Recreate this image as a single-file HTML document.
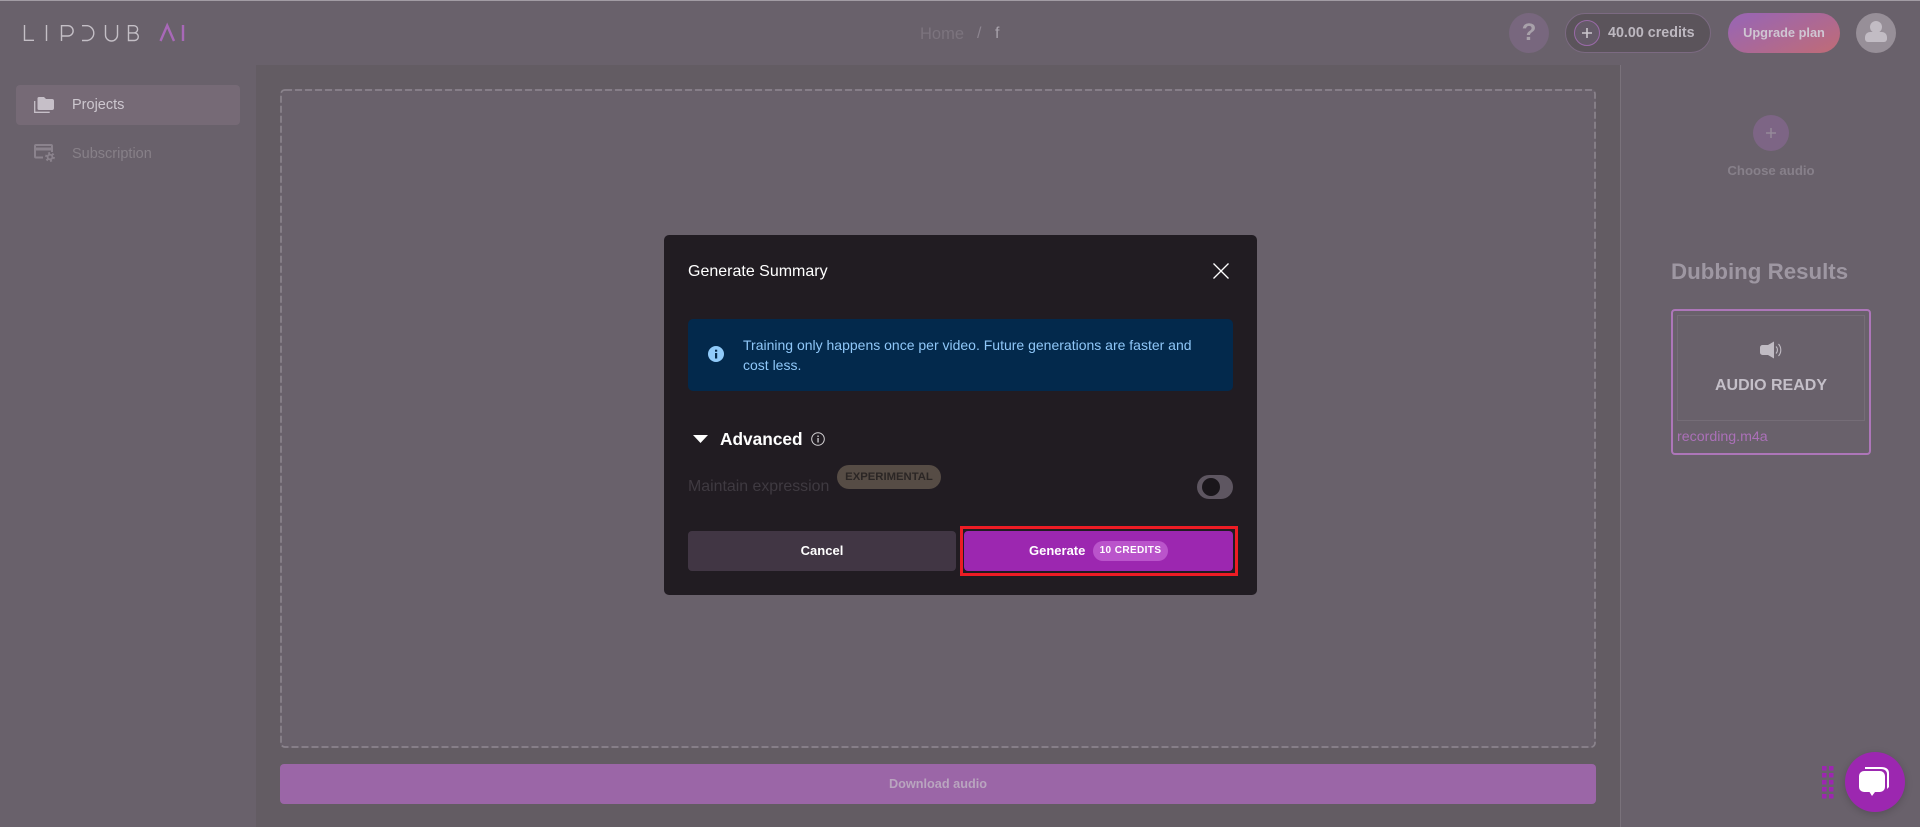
<!DOCTYPE html>
<html lang="en"><head><meta charset="utf-8"><title>LipDub AI</title>
<style>
*{box-sizing:border-box;margin:0;padding:0}
html,body{width:1920px;height:827px;overflow:hidden;background:#69616b;font-family:"Liberation Sans",sans-serif}
.a{position:absolute;white-space:nowrap}
.t{position:absolute;white-space:nowrap;line-height:20px}
svg{position:absolute;overflow:visible}
</style></head><body>
<div class="a" style="left:0;top:0;width:1920px;height:1px;background:#a29ca4"></div>
<div class="a" style="left:256px;top:65px;width:1364px;height:762px;background:#635c63"></div>
<div class="a" style="left:1620px;top:65px;width:1px;height:762px;background:#7a727b"></div>

<svg style="left:0;top:0" width="200" height="60" fill="none" stroke-width="1.4">
<g stroke="#c4bfc6"><path d="M24.5 25v15.3h9.5M46.5 25v16M61.5 41V25.7h6.5a5 5 0 0 1 0 10.3h-6.5M82 25.7h5.5a7.5 7.5 0 0 1 0 14.8H82M105.5 25v10a6 6 0 0 0 12 0V25M128.5 25.7v14.8h6a3.8 3.8 0 0 0 0-7.6h-6h5.500a3.600 3.600 0 0 0 0-7.200z"/></g>
<path d="M160.500 41l6.700-15.500L174 41M183 25v16" stroke="#a868b8" stroke-width="2.400"/>
</svg>

<div class="a" style="left:16px;top:85px;width:224px;height:40px;border-radius:4px;background:#766a76"></div>
<svg style="left:34px;top:96px" width="20" height="18" viewBox="0 0 20 18">
<path d="M5 1h5l2 2h6a2 2 0 0 1 2 2v7a2 2 0 0 1-2 2H5a1.500 1.500 0 0 1-1.500-1.500v-10A1.500 1.500 0 0 1 5 1z" fill="#c6bfc8"/>
<path d="M.7 5v11.300h15" fill="none" stroke="#c6bfc8" stroke-width="1.300"/>
</svg>
<div class="t" style="left:72px;top:95px;font-size:14.500px;color:#cdc7cf">Projects</div>
<svg style="left:34px;top:144px" width="21" height="18" viewBox="0 0 21 18" fill="none">
<path d="M9 13.500H2a1 1 0 0 1-1-1V2a1 1 0 0 1 1-1h15a1 1 0 0 1 1 1v6" stroke="#8b838d" stroke-width="2"/>
<rect x="1" y="3.500" width="17" height="3" fill="#8b838d"/>
<circle cx="16" cy="13" r="2.400" stroke="#8b838d" stroke-width="1.800"/>
<circle cx="16" cy="13" r="4" stroke="#8b838d" stroke-width="1.800" stroke-dasharray="2 2.200"/>
</svg>
<div class="t" style="left:72px;top:144px;font-size:14.500px;color:#878088">Subscription</div>

<div class="t" style="left:920px;top:24px;font-size:16.500px;color:#7c747e">Home</div>
<div class="t" style="left:977px;top:24px;font-size:16px;color:#8d8590">/</div>
<div class="t" style="left:995px;top:24px;font-size:16px;color:#a8a2ab">f</div>

<div class="a" style="left:1509px;top:13px;width:40px;height:40px;border-radius:50%;background:#78677e"></div>
<div class="t" style="left:1509px;top:23px;width:40px;text-align:center;font-size:24px;font-weight:700;color:#a8a1aa">?</div>
<div class="a" style="left:1565px;top:13px;width:146px;height:40px;border-radius:20px;background:#5b545b;border:1px solid #7c6a82"></div>
<div class="a" style="left:1574px;top:20px;width:26px;height:26px;border-radius:50%;background:#645a68;border:1px solid #9a6aa8"></div>
<svg style="left:1581px;top:27px" width="12" height="12"><path d="M6 1v10M1 6h10" stroke="#cbc6cd" stroke-width="1.600"/></svg>
<div class="t" style="left:1608px;top:23px;font-size:14.300px;font-weight:700;color:#bdb8c0">40.00 credits</div>
<div class="a" style="left:1728px;top:13px;width:112px;height:40px;border-radius:20px;background:linear-gradient(155deg,#9c66ae 15%,#bc6b7c 90%)"></div>
<div class="t" style="left:1728px;top:23px;width:112px;text-align:center;font-size:12.800px;font-weight:700;color:#cfc6d2">Upgrade plan</div>
<div class="a" style="left:1856px;top:13px;width:40px;height:40px;border-radius:50%;background:#978f98"></div>
<svg style="left:1865px;top:20px" width="22" height="24" viewBox="0 0 22 24"><circle cx="11" cy="7" r="6" fill="#c2bcc4"/><path d="M0 17a5 5 0 0 1 5-5h12a5 5 0 0 1 5 5v2a3 3 0 0 1-3 3H3a3 3 0 0 1-3-3z" fill="#c2bcc4"/></svg>

<div class="a" style="left:280px;top:89px;width:1316px;height:659px;background:#69616b;border-radius:5px"></div>
<svg style="left:280px;top:89px" width="1316" height="659" fill="none"><rect x="1" y="1" width="1314" height="657" rx="4" stroke="#8a838c" stroke-width="1.700" stroke-dasharray="7 3"/></svg>
<div class="a" style="left:280px;top:764px;width:1316px;height:40px;border-radius:4px;background:#9b66a7"></div>
<div class="t" style="left:280px;top:774px;width:1316px;text-align:center;font-size:12.700px;font-weight:700;color:#b9a5bf">Download audio</div>

<div class="a" style="left:1753px;top:115px;width:36px;height:36px;border-radius:50%;background:#7d6585"></div>
<svg style="left:1765px;top:127px" width="12" height="12"><path d="M6 1v10M1 6h10" stroke="#958a9a" stroke-width="1.500"/></svg>
<div class="t" style="left:1671px;top:161px;width:200px;text-align:center;font-size:13.200px;font-weight:700;color:#87808a">Choose audio</div>
<div class="t" style="left:1671px;top:259px;font-size:22.300px;line-height:26px;font-weight:700;color:#9e97a2">Dubbing Results</div>
<div class="a" style="left:1671px;top:309px;width:200px;height:146px;border:2px solid #ad76b9;border-radius:4px"></div>
<div class="a" style="left:1677px;top:315px;width:188px;height:106px;border:1px solid #756d77"></div>
<svg style="left:1760px;top:341px" width="23" height="18" viewBox="0 0 23 18"><path d="M0 6.500a2.500 2.500 0 0 1 2.500-2.500H8L14 .5v17L8 14H2.500A2.500 2.500 0 0 1 0 11.500z" fill="#c0bbc3"/><path d="M16 5.500a5 5 0 0 1 0 7M18.500 3a9 9 0 0 1 0 12" fill="none" stroke="#c0bbc3" stroke-width="1.100"/></svg>
<div class="t" style="left:1677px;top:376px;width:188px;text-align:center;font-size:16px;font-weight:700;color:#c4bfc8">AUDIO READY</div>
<div class="t" style="left:1677px;top:427px;font-size:14.200px;color:#ab70b8">recording.m4a</div>

<div class="a" style="left:664px;top:235px;width:593px;height:360px;border-radius:5px;background:#211c22"></div>
<div class="t" style="left:688px;top:262px;font-size:16px;color:#fff">Generate Summary</div>
<svg style="left:1213px;top:263px" width="16" height="16"><path d="M.5.500l15 15M15.500.500l-15 15" stroke="#fff" stroke-width="1.300"/></svg>
<div class="a" style="left:688px;top:319px;width:545px;height:72px;border-radius:5px;background:#03294c"></div>
<svg style="left:708px;top:346px" width="16" height="16"><circle cx="8" cy="8" r="8" fill="#90caf9"/><rect x="7" y="7" width="2.200" height="5.500" fill="#03294c"/><rect x="7" y="3.700" width="2.200" height="2" fill="#03294c"/></svg>
<div class="t" style="left:743px;top:335px;font-size:14px;color:#8fc7f8">Training only happens once per video. Future generations are faster and</div>
<div class="t" style="left:743px;top:355px;font-size:14px;color:#8fc7f8">cost less.</div>

<svg style="left:693px;top:435px" width="15" height="8"><path d="M0 0h15L7.500 8z" fill="#fff"/></svg>
<div class="t" style="left:720px;top:429px;font-size:17.300px;font-weight:700;color:#fff">Advanced</div>
<svg style="left:811px;top:432px" width="14" height="14"><circle cx="7" cy="7" r="6.300" fill="none" stroke="#d5d3d6" stroke-width="1"/><rect x="6.400" y="6" width="1.300" height="4.500" fill="#d5d3d6"/><rect x="6.400" y="3.500" width="1.300" height="1.500" fill="#d5d3d6"/></svg>
<div class="t" style="left:688px;top:477px;font-size:15.900px;color:#3f3a41">Maintain expression</div>
<div class="a" style="left:837px;top:465px;width:104px;height:24px;border-radius:12px;background:#564c45"></div>
<div class="t" style="left:837px;top:467px;width:104px;text-align:center;font-size:11.300px;font-weight:700;color:#2b2625">EXPERIMENTAL</div>
<div class="a" style="left:1197px;top:475px;width:36px;height:24px;border-radius:12px;background:#5e5661"></div>
<div class="a" style="left:1202px;top:478px;width:18px;height:18px;border-radius:50%;background:#1a161b"></div>

<div class="a" style="left:688px;top:531px;width:268px;height:40px;border-radius:4px;background:#413644"></div>
<div class="t" style="left:688px;top:541px;width:268px;text-align:center;font-size:13px;font-weight:700;color:#fff">Cancel</div>
<div class="a" style="left:960px;top:526px;width:278px;height:50px;border:3px solid #ed1c24"></div>
<div class="a" style="left:964px;top:531px;width:269px;height:40px;border-radius:4px;background:#9c27b0"></div>
<div class="t" style="left:1029px;top:541px;font-size:13px;font-weight:700;color:#fff">Generate</div>
<div class="a" style="left:1093px;top:541px;width:75px;height:20px;border-radius:10px;background:#ba54cb"></div>
<div class="t" style="left:1093px;top:541px;width:75px;text-align:center;font-size:10px;font-weight:700;letter-spacing:.4px;color:#fff">10 CREDITS</div>

<svg style="left:1822px;top:766px" width="14" height="33" fill="#9c27b0">
<rect x="0" y="0" width="4.500" height="4.500"/><rect x="7" y="0" width="4.500" height="4.500"/>
<rect x="0" y="7" width="4.500" height="4.500"/><rect x="7" y="7" width="4.500" height="4.500"/>
<rect x="0" y="14" width="4.500" height="4.500"/><rect x="7" y="14" width="4.500" height="4.500"/>
<rect x="0" y="21" width="4.500" height="4.500"/><rect x="7" y="21" width="4.500" height="4.500"/>
<rect x="0" y="28" width="4.500" height="4.500"/><rect x="7" y="28" width="4.500" height="4.500"/>
</svg>
<div class="a" style="left:1845px;top:752px;width:60px;height:60px;border-radius:50%;background:#9c27b0;box-shadow:0 2px 8px rgba(0,0,0,.18)"></div>
<svg style="left:1859px;top:767px" width="32" height="30" viewBox="0 0 32 30">
<path d="M6 0h16c5 0 8 2 8 6v14l-2 2V7c0-3-2.500-5-6-5H6z" fill="#fff"/>
<path d="M5 4h16a5 5 0 0 1 5 5v11a5 5 0 0 1-5 5h-5l-3 4-2.500-4H5a5 5 0 0 1-5-5V9a5 5 0 0 1 5-5z" fill="#fff"/>
</svg>
</body></html>
